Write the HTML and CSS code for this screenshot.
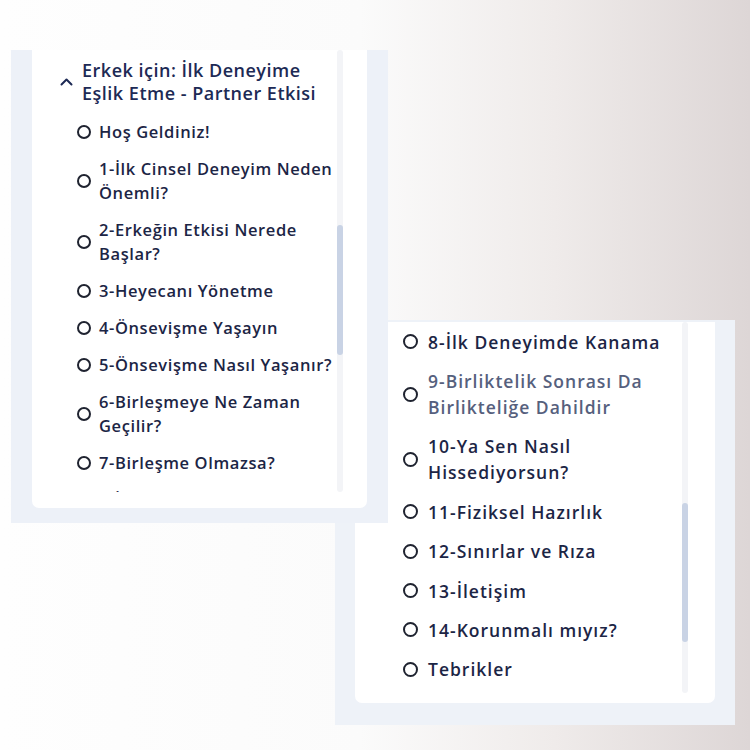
FILE: index.html
```html
<!DOCTYPE html>
<html lang="tr">
<head>
<meta charset="UTF-8">
<meta name="viewport" content="width=device-width, initial-scale=1.0">
<title>Erkek için: İlk Deneyime Eşlik Etme</title>
<link rel="stylesheet" href="styles.css">
</head>
<body>

<div class="collage">

    <!-- Ilk bolum: modul basligi ve ilk dersler -->
    <section class="snip snip-left">
        <div class="card">
            <div class="scroll">
                <div class="content">
                    <div class="module-title">
                        <svg class="caret" width="13" height="8" viewBox="0 0 13 8">
                            <polyline points="1.5,6.5 6.5,1.5 11.5,6.5" fill="none" stroke="#1d2a55" stroke-width="2" stroke-linecap="round" stroke-linejoin="round"/>
                        </svg>
                        <span>Erkek için: İlk Deneyime Eşlik Etme - Partner Etkisi</span>
                    </div>
                    <ul class="lessons">
                        <li><span class="dot"></span><span>Hoş Geldiniz!</span></li>
                        <li><span class="dot"></span><span>1-İlk Cinsel Deneyim Neden Önemli?</span></li>
                        <li><span class="dot"></span><span>2-Erkeğin Etkisi Nerede Başlar?</span></li>
                        <li><span class="dot"></span><span>3-Heyecanı Yönetme</span></li>
                        <li><span class="dot"></span><span>4-Önsevişme Yaşayın</span></li>
                        <li><span class="dot"></span><span>5-Önsevişme Nasıl Yaşanır?</span></li>
                        <li><span class="dot"></span><span>6-Birleşmeye Ne Zaman Geçilir?</span></li>
                        <li><span class="dot"></span><span>7-Birleşme Olmazsa?</span></li>
                        <li><span class="dot"></span><span>8-İlk Deneyimde Kanama</span></li>
                    </ul>
                </div>
                <div class="scrollbar"><div class="thumb" style="margin-top: 175px; height: 130px;"></div></div>
            </div>
        </div>
    </section>

    <!-- Ikinci bolum: listenin devami -->
    <section class="snip snip-right">
        <div class="card">
            <div class="scroll">
                <div class="content">
                    <ul class="lessons">
                        <li><span class="dot"></span><span>8-İlk Deneyimde Kanama</span></li>
                        <li class="muted"><span class="dot"></span><span>9-Birliktelik Sonrası Da Birlikteliğe Dahildir</span></li>
                        <li><span class="dot"></span><span>10-Ya Sen Nasıl Hissediyorsun?</span></li>
                        <li><span class="dot"></span><span>11-Fiziksel Hazırlık</span></li>
                        <li><span class="dot"></span><span>12-Sınırlar ve Rıza</span></li>
                        <li><span class="dot"></span><span>13-İletişim</span></li>
                        <li><span class="dot"></span><span>14-Korunmalı mıyız?</span></li>
                        <li><span class="dot"></span><span>Tebrikler</span></li>
                    </ul>
                </div>
                <div class="scrollbar"><div class="thumb" style="margin-top: 181px; height: 139px;"></div></div>
            </div>
        </div>
    </section>

</div>

</body>
</html>
```

FILE: styles.css
```css
body {
    margin: 0;
    font-family: "Open Sans", Arial, sans-serif;
    background: linear-gradient(90deg, #fefefe 0%, #fbfbfb 48%, #efebea 74%, #ddd6d6 100%);
    min-height: 750px;
}

/* dos recortes que se solapan */
.collage {
    display: grid;
    grid-template-columns: 11px 324px 53px 347px 1fr;
    grid-template-rows: 50px 270px 203px 202px 1fr;
    height: 750px;
}

.snip {
    display: flex;
    flex-direction: column;
}

.snip-left {
    grid-column: 2 / 4;
    grid-row: 2 / 4;
    z-index: 1;
    background-color: #edf1f8;
    padding: 0 21px 15px;
}

.snip-right {
    grid-column: 3 / 5;
    grid-row: 3 / 5;
    background-color: #eef2f8;
    padding: 2px 20px 22px;
}

.card {
    flex: 1;
    background-color: #fff;
    border-radius: 0 0 7px 7px;
}

.snip-left .card {
    padding-bottom: 16px;
}

.snip-right .card {
    padding-bottom: 10px;
}

.scroll {
    display: flex;
    overflow: hidden;
}

.snip-left .scroll {
    height: 442px;
    padding-right: 24px;
}

.snip-right .scroll {
    height: 371px;
    padding-right: 27px;
}

.content {
    flex: 1;
    min-width: 0;
}

.scrollbar {
    width: 6px;
    border-radius: 3px;
    background-color: #f3f4f7;
    flex-shrink: 0;
}

.thumb {
    border-radius: 3px;
    background-color: #c9d3e5;
}

.module-title {
    display: flex;
    align-items: center;
    gap: 9px;
    padding: 9px 0 0 28px;
    margin-bottom: 8px;
    font-size: 18px;
    line-height: 23px;
    font-weight: 600;
    letter-spacing: 0.5px;
    color: #1d2a55;
}

.caret {
    flex-shrink: 0;
}

.module-title span {
    width: 248px;
}

.lessons {
    list-style-type: none;
    margin: 0;
    padding: 0;
}

.lessons li {
    display: flex;
    align-items: center;
    color: #1c2545;
    font-weight: 600;
}

.snip-left .lessons li {
    padding: 6.5px 0 6.5px 45px;
    gap: 8px;
    font-size: 16.5px;
    line-height: 24px;
    letter-spacing: 0.6px;
}

.snip-right .lessons li {
    padding: 6.7px 0 6.7px 48px;
    gap: 10px;
    font-size: 17.5px;
    line-height: 26px;
    letter-spacing: 1px;
}

.lessons li.muted {
    color: #56607d;
}

.dot {
    flex-shrink: 0;
    box-sizing: border-box;
    width: 14px;
    height: 14px;
    border: 2px solid #1f2330;
    border-radius: 50%;
}

.snip-right .dot {
    width: 15px;
    height: 15px;
}
```
